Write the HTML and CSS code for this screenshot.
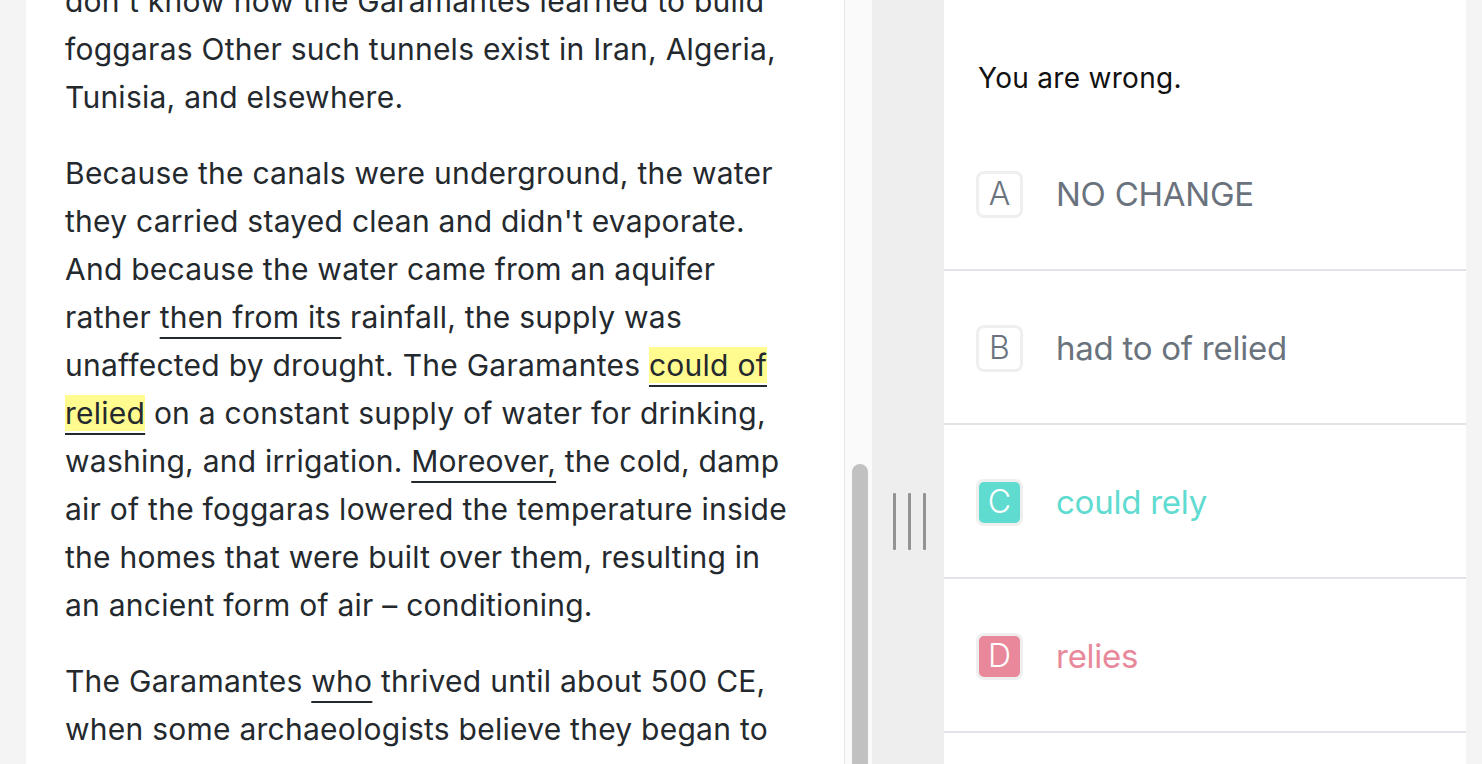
FILE: index.html
```html
<!DOCTYPE html>
<html lang="en">
<head>
<meta charset="utf-8">
<title>Passage question</title>
<link rel="stylesheet" href="styles.css">
</head>
<body>
<div class="layout">
  <section class="passage">
    <div class="passage-text">
      <p>don't know how the Garamantes learned to build<br>
      foggaras Other such tunnels exist in Iran, Algeria,<br>
      Tunisia, and elsewhere.</p>
      <p>Because the canals were underground, the water<br>
      they carried stayed clean and didn't evaporate.<br>
      And because the water came from an aquifer<br>
      rather <span class="ul">then from its</span> rainfall, the supply was<br>
      unaffected by drought. The Garamantes <span class="ul hl">could of</span><br>
      <span class="ul hl">relied</span> on a constant supply of water for drinking,<br>
      washing, and irrigation. <span class="ul">Moreover,</span> the cold, damp<br>
      air of the foggaras lowered the temperature inside<br>
      the homes that were built over them, resulting in<br>
      an ancient form of air – conditioning.</p>
      <p>The Garamantes <span class="ul">who</span> thrived until about 500 CE,<br>
      when some archaeologists believe they began to<br>
      decline as the underground water supply ran out.</p>
    </div>
  </section>
  <div class="scrolltrack"><div class="thumb"></div></div>
  <div class="splitter">
    <div class="grip"><span></span><span></span><span></span></div>
  </div>
  <section class="answers">
    <div class="feedback">You are wrong.</div>
    <ul class="choices">
      <li class="choice"><span class="letter">A</span><span class="choice-text">NO CHANGE</span></li>
      <li class="choice"><span class="letter">B</span><span class="choice-text">had to of relied</span></li>
      <li class="choice correct"><span class="letter">C</span><span class="choice-text">could rely</span></li>
      <li class="choice wrong"><span class="letter">D</span><span class="choice-text">relies</span></li>
    </ul>
  </section>
</div>
</body>
</html>
```

FILE: styles.css
```css
* { box-sizing: border-box; }
html, body {
  margin: 0;
  padding: 0;
  height: 100%;
  overflow: hidden;
}
body {
  background: #f4f4f4;
  font-family: Inter, "Noto Sans", "Liberation Sans", sans-serif;
}
.layout {
  display: flex;
  height: 100vh;
}
.passage {
  margin-left: 26px;
  width: 819px;
  background: #fff;
  border-right: 1px solid #e6e6e6;
  padding: 0 20px 0 39px;
  overflow: hidden;
  flex: none;
}
.passage-text {
  margin-top: -23px;
  color: #24292e;
  font-size: 30px;
  line-height: 48px;
  letter-spacing: 0.25px;
  white-space: nowrap;
}
.passage-text p {
  margin: 0 0 28px;
}
.ul {
  text-decoration: underline;
  text-decoration-thickness: 2px;
  text-underline-offset: 9px;
  text-decoration-skip-ink: none;
}
.hl {
  background: #fffb8f;
}
.scrolltrack {
  width: 27px;
  flex: none;
  background: #fafafa;
  overflow: hidden;
}
.thumb {
  margin: 464px 0 0 7px;
  width: 16px;
  height: 420px;
  border-radius: 8px;
  background: #c1c1c1;
}
.splitter {
  width: 72px;
  flex: none;
  background: #eeeeee;
  display: flex;
  justify-content: center;
  align-items: flex-start;
}
.grip {
  margin: 493px 0 0 2px;
  display: flex;
  gap: 12px;
}
.grip span {
  width: 3px;
  height: 57px;
  background: #939393;
  border-radius: 1px;
}
.answers {
  width: 522px;
  flex: none;
  background: #fff;
}
.feedback {
  padding: 61px 0 0 34px;
  height: 117px;
  font-size: 28px;
  letter-spacing: 0.3px;
  line-height: 34px;
  color: #111;
}
.choices {
  list-style: none;
  margin: 0;
  padding: 0;
}
.choice {
  height: 154px;
  border-bottom: 2px solid #e1e4e8;
  display: flex;
  align-items: center;
  padding: 2px 0 0 32px;
  gap: 33px;
  color: #6a737d;
  font-size: 33px;
  letter-spacing: -0.25px;
}
.letter {
  width: 47px;
  height: 47px;
  border: 3px solid #efefef;
  border-radius: 8px;
  display: flex;
  align-items: center;
  justify-content: center;
  font-size: 32px;
  font-weight: 300;
  letter-spacing: 0;
  line-height: 1;
  color: #6a737d;
  flex: none;
}
.choice.correct { color: #5fdbd0; }
.choice.correct .letter { background: #5fdbd0; color: #fff; }
.choice.wrong { color: #e8889a; }
.choice.wrong .letter { background: #e8889a; color: #fff; }
```
